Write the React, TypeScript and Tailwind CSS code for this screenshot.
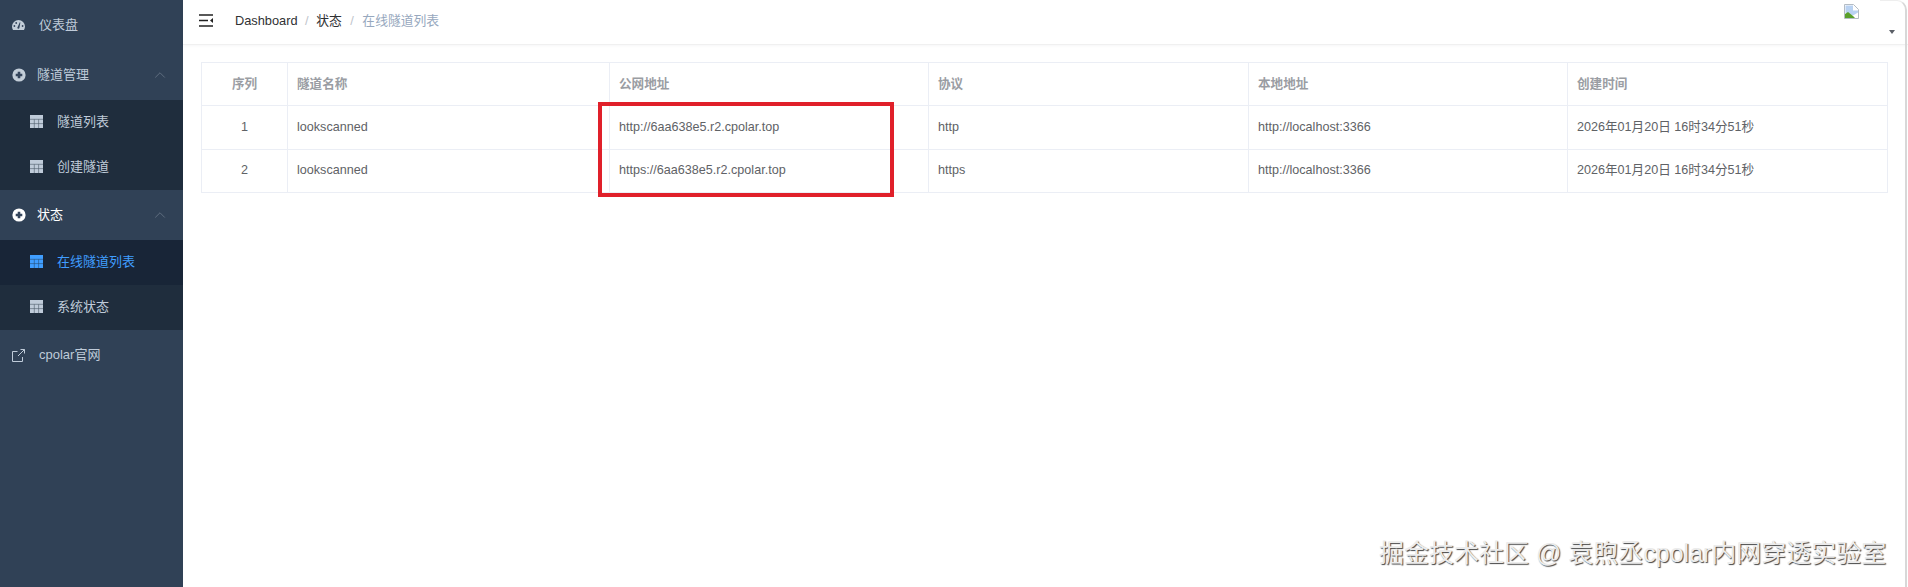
import { ChevronUp } from "lucide-react";

const font = "font-['Liberation_Sans','Noto_Sans_CJK_SC',sans-serif]";

const Gauge = () => (
  <svg width="13" height="10" viewBox="0 0 13 10" className="shrink-0">
    <path d="M6.500 0A6.500 6.500 0 0 0 0 6.500c0 1.300.4 2.500 1 3.500h11c.6-1 1-2.200 1-3.500A6.500 6.500 0 0 0 6.500 0z" fill="#c3ced9" />
    <circle cx="2.400" cy="6" r="0.900" fill="#34455c" />
    <circle cx="4.200" cy="3" r="0.900" fill="#34455c" />
    <circle cx="10.600" cy="6" r="0.900" fill="#34455c" />
    <path d="M5.300 7.800 7.800 2.200l.6.200-1 5.600a1.100 1.100 0 0 1-2.100-.2z" fill="#34455c" />
  </svg>
);

const PlusCircle = ({ color }: { color: string }) => (
  <svg width="14" height="14" viewBox="0 0 14 14" className="shrink-0">
    <circle cx="7" cy="7" r="6.600" fill={color} />
    <path d="M7 3.700v6.600M3.700 7h6.600" stroke="#34455c" strokeWidth="2.600" />
  </svg>
);

const Grid = ({ color }: { color: string }) => (
  <svg width="13" height="13" viewBox="0 0 13 13" className="shrink-0">
    <rect width="13" height="13" fill={color} />
    <path d="M0 4.300h13M0 8.600h13M4.300 4.300V13M8.600 4.300V13" stroke="#1f2d3d" strokeWidth="0.600" opacity="0.700" />
  </svg>
);

// square-cornered box with the arrow leaving the top right corner
const External = () => (
  <svg width="13" height="13" viewBox="0 0 13 13" fill="none" stroke="#bfcbd9" strokeWidth="1" className="shrink-0">
    <path d="M5.500 2.500H.5v10h10V8" />
    <path d="M8.500.5h4v4M12.500.5 6 7" />
  </svg>
);

const Group = ({ title, active }: { title: string; active?: boolean }) => (
  <div className={`h-[50px] flex items-center pl-3 pr-[14px] ${active ? "text-white" : "text-[#bfcbd9]"}`}>
    <PlusCircle color={active ? "#ffffff" : "#c3ced9"} />
    <span className="ml-[11px] flex-1 text-[13px]">{title}</span>
    <ChevronUp size={18} strokeWidth={1} className="text-[#6d7b8c]" />
  </div>
);

const SubItem = ({ title, active }: { title: string; active?: boolean }) => (
  <div className={`h-[45px] flex items-center pl-[30px] pb-[2px] ${active ? "bg-[#182537] text-[#409eff]" : "bg-[#1f2d3d] text-[#bfcbd9]"}`}>
    <Grid color={active ? "#409eff" : "#bfcbd9"} />
    <span className="ml-[14px] text-[13px]">{title}</span>
  </div>
);

const columns = [
  { title: "序列", w: "w-[86px]", center: true },
  { title: "隧道名称", w: "w-[322px]" },
  { title: "公网地址", w: "w-[319px]" },
  { title: "协议", w: "w-[320px]" },
  { title: "本地地址", w: "w-[319px]" },
  { title: "创建时间", w: "" },
];

const rows = [
  ["1", "lookscanned", "http://6aa638e5.r2.cpolar.top", "http", "http://localhost:3366", "2026年01月20日 16时34分51秒"],
  ["2", "lookscanned", "https://6aa638e5.r2.cpolar.top", "https", "http://localhost:3366", "2026年01月20日 16时34分51秒"],
];

export default function App() {
  return (
    <div className={`relative flex h-[587px] w-[1908px] overflow-hidden bg-white ${font}`}>
      <aside className="w-[183px] shrink-0 bg-[#304156]">
        <div className="h-[50px] flex items-center pl-3 text-[#bfcbd9]">
          <Gauge />
          <span className="ml-[14px] text-[13px]">仪表盘</span>
        </div>
        <Group title="隧道管理" />
        <SubItem title="隧道列表" />
        <SubItem title="创建隧道" />
        <Group title="状态" active />
        <SubItem title="在线隧道列表" active />
        <SubItem title="系统状态" />
        <div className="h-[50px] flex items-center pl-3 text-[#bfcbd9]">
          <External />
          <span className="ml-[14px] text-[13px]">cpolar官网</span>
        </div>
      </aside>

      <main className="flex-1 min-w-0">
        <header className="relative h-[45px] flex items-center border-b border-[#f0f0f0] shadow-[0_1px_3px_rgba(0,21,41,0.04)]">
          <svg width="14" height="13" viewBox="0 0 14 13" className="ml-[16px] mb-[3px]">
            <path d="M0 1h14M0 6.500h9M0 12h14" stroke="#222" strokeWidth="1.600" />
            <path d="M14 4v5l-3-2.500z" fill="#222" />
          </svg>
          <nav className="ml-[22px] mb-[3px] flex items-center text-[12.800px]">
            <span className="text-[#303133]">Dashboard</span>
            <span className="mx-[7.500px] text-[#c0c4cc]">/</span>
            <span className="text-[#303133]">状态</span>
            <span className="mx-[8.500px] text-[#c0c4cc]">/</span>
            <span className="text-[#97a8be]">在线隧道列表</span>
          </nav>
          <svg width="15" height="15" viewBox="0 0 15 15" className="absolute left-[1661px] top-[4px]">
            <path d="M.5.5h9l5 5v9H.5z" fill="#fff" stroke="#b4bcc4" />
            <path d="M1.500 1.500h7.500v5h5v2L9 11.500 1.500 9z" fill="#b9d2f2" />
            <path d="M1 14V10l3-2 5 4 2 2z" fill="#5aa02c" />
          </svg>
          <div className="absolute left-[1706px] top-[30px] border-x-[3px] border-t-[4px] border-x-transparent border-t-[#5a5e66]" />
        </header>

        <section className="pl-[18px] pr-[20px] pt-[17px]">
          <table className="w-[1687px] table-fixed border-collapse text-[12.600px]">
            <thead>
              <tr>
                {columns.map((c) => (
                  <th
                    key={c.title}
                    className={`${c.w} h-[43px] border border-[#ebeef5] px-[9px] font-bold text-[#9a9da3] ${c.center ? "text-center" : "text-left"}`}
                  >
                    {c.title}
                  </th>
                ))}
              </tr>
            </thead>
            <tbody>
              {rows.map((r) => (
                <tr key={r[0]}>
                  {r.map((v, i) => (
                    <td
                      key={i}
                      className={`h-[43.500px] border border-[#ebeef5] px-[9px] text-[#606266] ${i === 0 ? "text-center" : ""}`}
                    >
                      {v}
                    </td>
                  ))}
                </tr>
              ))}
            </tbody>
          </table>
        </section>
      </main>

      <div className="absolute left-[598px] top-[102px] h-[95px] w-[296px] border-4 border-[#e0202a]" />
      <div className="absolute left-[1379px] top-[537px] text-[25px] leading-[32px] text-[#ececec] [text-shadow:1px_1px_1px_#444]">
        掘金技术社区 @ 袁煦丞cpolar内网穿透实验室
      </div>
      <div className="absolute left-[1880px] top-0 h-[600px] w-[27px] rounded-tr-[10px] border-r-2 border-t border-[#d8d8d8] border-t-[#eeeeee]" />
    </div>
  );
}
